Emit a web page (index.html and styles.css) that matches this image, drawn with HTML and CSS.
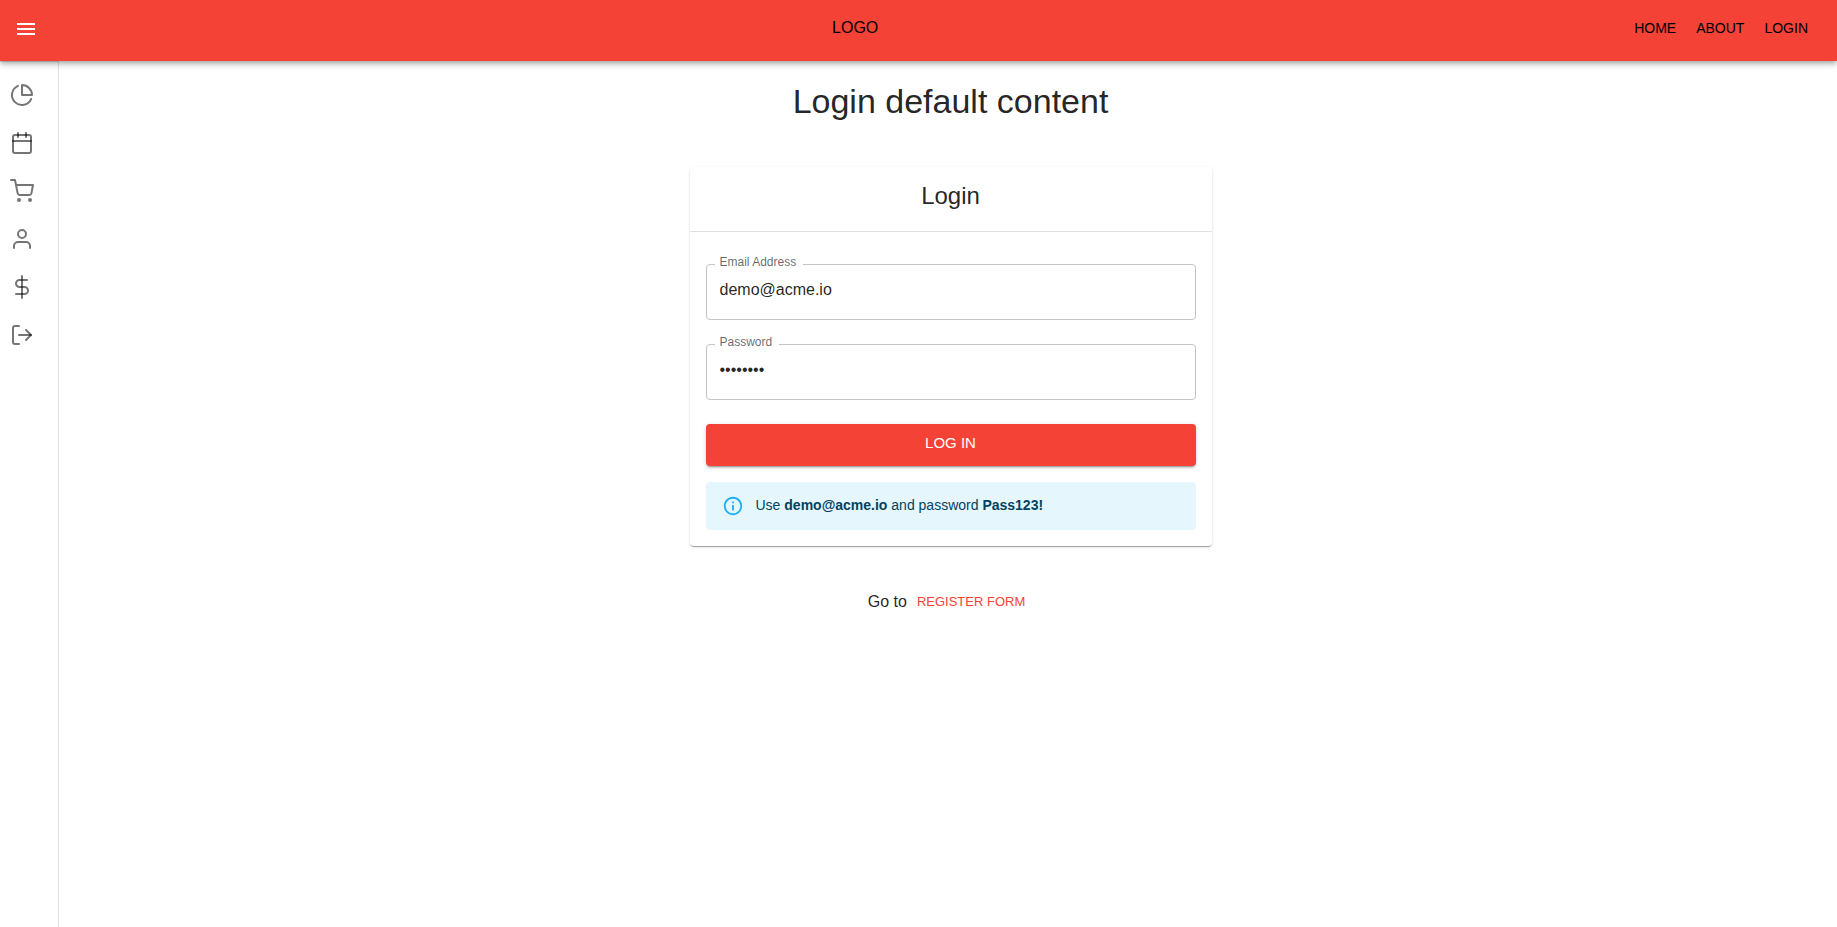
FILE: index.html
```html
<!DOCTYPE html>
<html lang="en">
<head>
<meta charset="utf-8">
<meta name="viewport" content="width=device-width, initial-scale=1">
<title>Login</title>
<link rel="stylesheet" href="styles.css">
</head>
<body>
<header class="topbar">
  <button class="menu-button" type="button" aria-label="Open menu">
    <svg class="icon-solid" viewBox="0 0 24 24" aria-hidden="true"><path d="M3 18h18v-2H3v2zm0-5h18v-2H3v2zm0-7v2h18V6H3z"/></svg>
  </button>
  <div class="logo">LOGO</div>
  <nav class="topnav" aria-label="Main">
    <a href="#home">HOME</a>
    <a href="#about">ABOUT</a>
    <a href="#login">LOGIN</a>
  </nav>
</header>
<div class="shell">
  <nav class="sidebar" aria-label="Sections">
    <a href="#reports" aria-label="Reports"><svg class="icon" viewBox="0 0 24 24"><path d="M21.21 15.89A10 10 0 1 1 8 2.83"/><path d="M22 12A10 10 0 0 0 12 2v10z"/></svg></a>
    <a href="#calendar" aria-label="Calendar"><svg class="icon" viewBox="0 0 24 24"><rect x="3" y="4" width="18" height="18" rx="2"/><path d="M16 2v4"/><path d="M8 2v4"/><path d="M3 10h18"/></svg></a>
    <a href="#cart" aria-label="Cart"><svg class="icon" viewBox="0 0 24 24"><circle cx="9" cy="21" r="1"/><circle cx="20" cy="21" r="1"/><path d="M1 1h4l2.68 13.39a2 2 0 0 0 2 1.61h9.72a2 2 0 0 0 2-1.61L23 6H6"/></svg></a>
    <a href="#account" aria-label="Account"><svg class="icon" viewBox="0 0 24 24"><path d="M20 21v-2a4 4 0 0 0-4-4H8a4 4 0 0 0-4 4v2"/><circle cx="12" cy="7" r="4"/></svg></a>
    <a href="#pricing" aria-label="Pricing"><svg class="icon" viewBox="0 0 24 24"><path d="M12 1v22"/><path d="M17 5H9.500a3.500 3.500 0 0 0 0 7h5a3.500 3.500 0 0 1 0 7H6"/></svg></a>
    <a href="#logout" aria-label="Log out"><svg class="icon" viewBox="0 0 24 24"><path d="M9 21H5a2 2 0 0 1-2-2V5a2 2 0 0 1 2-2h4"/><path d="M16 17l5-5-5-5"/><path d="M21 12H9"/></svg></a>
  </nav>
  <main class="content">
    <h1 class="page-title">Login default content</h1>
    <section class="card">
      <h2 class="card-title">Login</h2>
      <form class="card-body">
        <div class="field">
          <label for="email">Email Address</label>
          <input id="email" type="email" value="demo@acme.io">
        </div>
        <div class="field">
          <label for="password">Password</label>
          <input id="password" type="password" value="Pass123!">
        </div>
        <button class="submit" type="submit">LOG IN</button>
        <div class="alert" role="note">
          <svg class="alert-icon" viewBox="0 0 24 24" aria-hidden="true"><path d="M11 7h2v2h-2zm0 4h2v6h-2zm1-9C6.480 2 2 6.480 2 12s4.480 10 10 10 10-4.480 10-10S17.520 2 12 2zm0 18c-4.410 0-8-3.590-8-8s3.590-8 8-8 8 3.590 8 8-3.590 8-8 8z"/></svg>
          <p>Use <strong>demo@acme.io</strong> and password <strong>Pass123!</strong></p>
        </div>
      </form>
    </section>
    <p class="switch">Go to <a href="#register">REGISTER FORM</a></p>
  </main>
</div>
</body>
</html>
```
FILE: styles.css
```css
* {
  box-sizing: border-box;
}

body {
  margin: 0;
  min-height: 100vh;
  display: flex;
  flex-direction: column;
  background: #fff;
  color: rgba(0, 0, 0, 0.87);
  font: 16px/24px "Liberation Sans", Arial, sans-serif;
}

h1, h2, p {
  margin: 0;
  font-weight: 400;
}

a {
  text-decoration: none;
}

.topbar {
  position: relative;
  z-index: 1;
  display: grid;
  grid-template-columns: 100fr auto 112fr;
  align-items: center;
  padding: 5px 29px 8px 2px;
  background: #f44336;
  color: #000;
  box-shadow: 0 2px 4px -1px rgba(0, 0, 0, 0.2), 0 4px 5px rgba(0, 0, 0, 0.14), 0 1px 10px rgba(0, 0, 0, 0.12);
}

.menu-button {
  justify-self: start;
  display: flex;
  padding: 12px;
  border: 0;
  background: none;
  color: #fff;
  cursor: pointer;
}

.icon-solid {
  width: 24px;
  height: 24px;
  fill: currentColor;
}

.logo {
  padding-bottom: 2px;
}

.topnav {
  justify-self: end;
  display: flex;
  gap: 20px;
  padding-bottom: 2px;
  font-size: 14px;
}

.topnav a {
  color: #000;
}

.shell {
  flex: 1;
  display: flex;
}

.sidebar {
  flex: none;
  display: flex;
  flex-direction: column;
  width: 59px;
  padding-top: 9px;
  border-top: 1px solid #e0e0e0;
  border-right: 1px solid #e0e0e0;
}

.sidebar a {
  display: flex;
  padding: 12px 10px;
  color: rgba(0, 0, 0, 0.54);
}

.icon {
  width: 24px;
  height: 24px;
  fill: none;
  stroke: currentColor;
  stroke-width: 2;
  stroke-linecap: round;
  stroke-linejoin: round;
}

.content {
  flex: 1;
  display: flex;
  flex-direction: column;
  align-items: center;
  padding: 20px 0 20px 5px;
}

.page-title {
  font-size: 34px;
  line-height: 40px;
}

.card {
  width: 100%;
  max-width: 522px;
  margin-top: 46px;
  border-radius: 4px;
  box-shadow: 0 2px 1px -1px rgba(0, 0, 0, 0.2), 0 1px 1px rgba(0, 0, 0, 0.14), 0 1px 3px rgba(0, 0, 0, 0.12);
}

.card-title {
  padding: 13px 16px 19px;
  border-bottom: 1px solid #e0e0e0;
  font-size: 24px;
  line-height: 32px;
  text-align: center;
}

.card-body {
  display: flex;
  flex-direction: column;
  padding: 32px 16px 16px;
}

.field {
  position: relative;
  margin-bottom: 24px;
}

.field label {
  position: absolute;
  top: -10px;
  left: 9px;
  padding: 0 7px 0 5px;
  background: #fff;
  color: rgba(0, 0, 0, 0.6);
  font-size: 12px;
  line-height: 16px;
}

.field input {
  display: block;
  width: 100%;
  height: 56px;
  padding: 0 13px 4px;
  border: 1px solid #c4c4c4;
  border-radius: 4px;
  background: none;
  color: inherit;
  font: inherit;
}

.submit {
  padding: 7px 22px 11px;
  border: 0;
  border-radius: 4px;
  background: #f44336;
  color: #fff;
  font: inherit;
  font-size: 15px;
  box-shadow: 0 3px 1px -2px rgba(0, 0, 0, 0.2), 0 2px 2px rgba(0, 0, 0, 0.14), 0 1px 5px rgba(0, 0, 0, 0.12);
  cursor: pointer;
}

.alert {
  display: flex;
  align-items: center;
  gap: 12px;
  margin-top: 16px;
  padding: 12px 16px;
  border-radius: 4px;
  background: #e5f6fd;
  color: #014361;
  font-size: 14px;
}

.alert p {
  padding-bottom: 2px;
  line-height: 22px;
}

.alert-icon {
  flex: none;
  width: 22px;
  height: 22px;
  fill: #1db0f6;
}

.switch {
  display: flex;
  align-items: center;
  gap: 2px;
  margin-top: 44px;
}

.switch a {
  padding: 0 8px;
  color: #f44336;
  font-size: 13px;
}
```
